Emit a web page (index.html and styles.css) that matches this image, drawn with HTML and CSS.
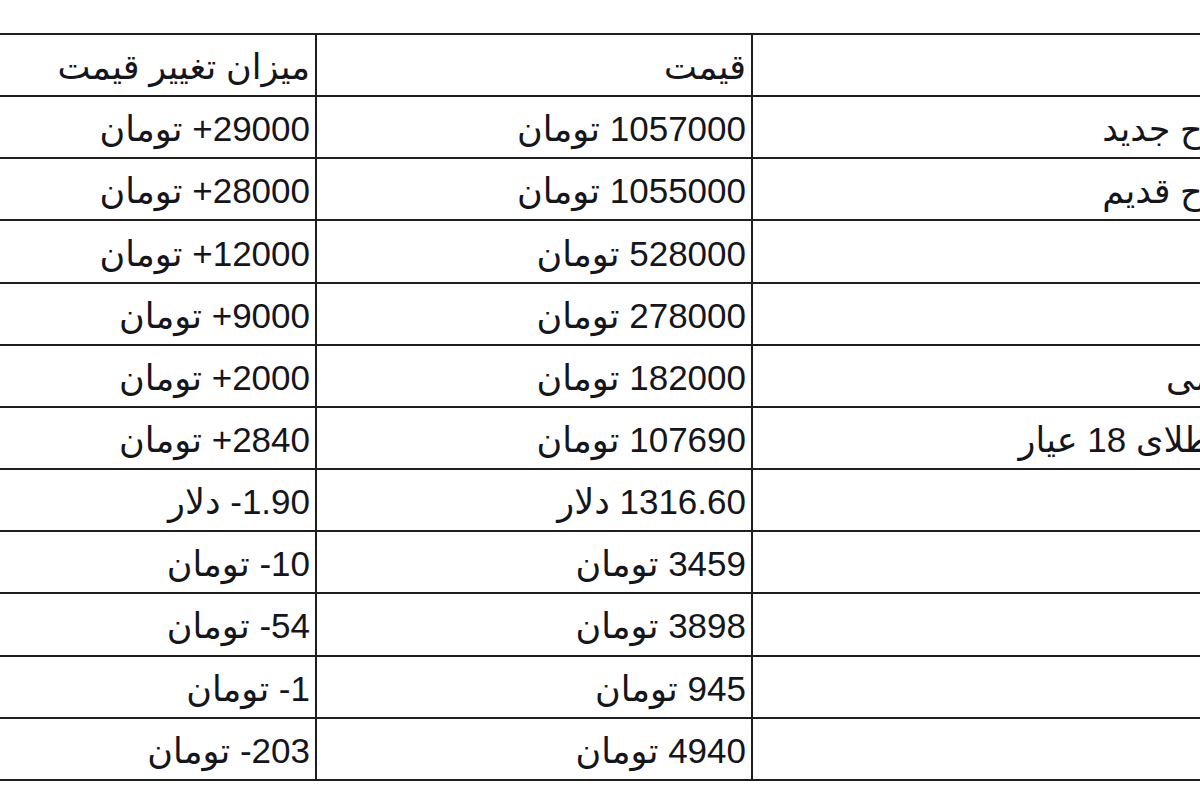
FILE: index.html
```html
<!DOCTYPE html>
<html lang="fa" dir="rtl">
<head>
<meta charset="utf-8">
<title>قیمت طلا و سکه</title>
<link rel="stylesheet" href="styles.css">
</head>
<body>
<div class="viewport">
  <table class="prices">
    <colgroup>
      <col class="col-name">
      <col class="col-price">
      <col class="col-change">
    </colgroup>
    <tbody>
      <tr><td class="name"></td><td>قیمت</td><td>میزان تغییر قیمت</td></tr>
      <tr><td class="name">سکه طرح جدید</td><td>1057000 تومان</td><td>29000+ تومان</td></tr>
      <tr><td class="name">سکه طرح قدیم</td><td>1055000 تومان</td><td>28000+ تومان</td></tr>
      <tr><td class="name">نیم سکه</td><td>528000 تومان</td><td>12000+ تومان</td></tr>
      <tr><td class="name">ربع سکه</td><td>278000 تومان</td><td>9000+ تومان</td></tr>
      <tr><td class="name">سکه گرمی</td><td>182000 تومان</td><td>2000+ تومان</td></tr>
      <tr><td class="name">هر گرم طلای 18 عیار</td><td>107690 تومان</td><td>2840+ تومان</td></tr>
      <tr><td class="name">انس طلا</td><td>1316.60 دلار</td><td>1.90- دلار</td></tr>
      <tr><td class="name">دلار</td><td>3459 تومان</td><td>10- تومان</td></tr>
      <tr><td class="name">یورو</td><td>3898 تومان</td><td>54- تومان</td></tr>
      <tr><td class="name">درهم</td><td>945 تومان</td><td>1- تومان</td></tr>
      <tr><td class="name">پوند</td><td>4940 تومان</td><td>203- تومان</td></tr>
    </tbody>
  </table>
</div>
</body>
</html>
```
FILE: styles.css
```css
html, body {
  margin: 0;
  padding: 0;
  background: #ffffff;
}

.viewport {
  width: 1200px;
  height: 800px;
  overflow: hidden;
  direction: ltr;
}

.prices {
  direction: rtl;
  width: 1332px;
  margin-top: 33px;
  border-collapse: separate;
  border-spacing: 0;
  table-layout: fixed;
  border-top: 2px solid #1e1e1e;
  font-family: "Liberation Sans", "DejaVu Sans", sans-serif;
  font-size: 35px;
  color: #15151c;
}

.col-name { width: 581px; }
.col-price { width: 436px; }
.col-change { width: 315px; }

.prices td {
  box-sizing: border-box;
  height: 62.17px;
  padding: 4px 5px 0 0;
  text-align: right;
  vertical-align: middle;
  white-space: nowrap;
  overflow: hidden;
  border-bottom: 2px solid #1e1e1e;
  border-left: 2px solid #1e1e1e;
}

.prices td:last-child {
  border-left: none;
}
```
